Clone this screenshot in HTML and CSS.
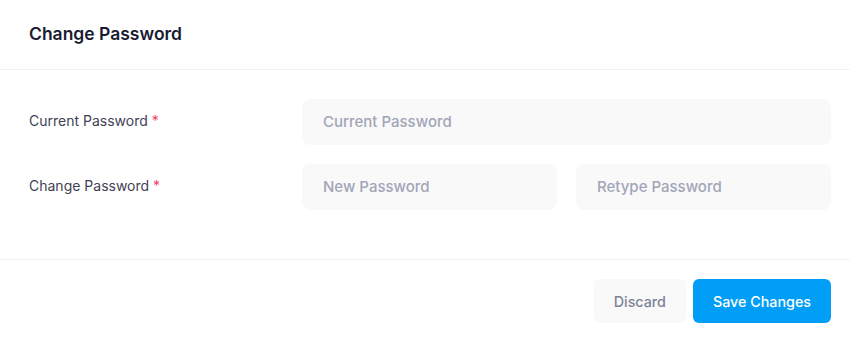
FILE: index.html
```html
<!DOCTYPE html>
<html lang="en">
<head>
  <meta charset="UTF-8">
  <meta name="viewport" content="width=device-width, initial-scale=1.0">
  <title>Change Password</title>
  <link rel="stylesheet" href="styles.css">
</head>
<body>

  <div class="card">
    <div class="card-header">
      <h3 class="card-title">Change Password</h3>
    </div>

    <div class="card-body">
      <div class="form-row">
        <label class="form-label" for="current">Current Password <span class="required">*</span></label>
        <div class="form-inputs">
          <input type="password" id="current" class="form-control" placeholder="Current Password">
        </div>
      </div>

      <div class="form-row">
        <label class="form-label" for="newPass">Change Password <span class="required">*</span></label>
        <div class="form-inputs two">
          <input type="password" id="newPass" class="form-control" placeholder="New Password">
          <input type="password" id="retype" class="form-control" placeholder="Retype Password">
        </div>
      </div>
    </div>

    <div class="card-footer">
      <button class="btn btn-light">Discard</button>
      <button class="btn btn-primary">Save Changes</button>
    </div>
  </div>

</body>
</html>
```

FILE: styles.css
```css
body {
  font-family: Inter, "Noto Sans", sans-serif;
  background-color: #fff;
  margin: 0;
  padding: 0;
}

.card {
  background-color: #fff;
}

.card-header {
  height: 69px;
  padding: 0 29px;
  display: flex;
  align-items: center;
  border-bottom: 1px solid #eff2f5;
}

.card-title {
  margin: 0 0 3px;
  font-size: 17.5px;
  font-weight: 600;
  color: #181c32;
}

.card-body {
  padding: 29px 19px 49px 29px;
  display: flex;
  flex-direction: column;
  gap: 19px;
}

.form-row {
  display: grid;
  grid-template-columns: 273px 1fr;
  align-items: center;
}

.form-label {
  font-size: 14px;
  font-weight: 400;
  color: #3f4254;
  margin-top: -4px;
}

.required {
  color: #f1416c;
}

.form-inputs {
  display: grid;
  grid-template-columns: minmax(0, 1fr);
  gap: 19px;
}

.form-inputs.two {
  grid-template-columns: minmax(0, 1fr) minmax(0, 1fr);
}

.form-control {
  width: 100%;
  min-width: 0;
  height: 46px;
  box-sizing: border-box;
  padding: 0 21px 2px;
  border: none;
  border-radius: 8px;
  background-color: #f9f9f9;
  font-family: inherit;
  font-size: 15px;
  font-weight: 500;
  color: #5e6278;
  outline: none;
}

.form-control::placeholder {
  color: #a1a5b7;
}

.card-footer {
  border-top: 1px solid #eff2f5;
  padding: 19px 19px 14px;
  display: flex;
  justify-content: flex-end;
  gap: 7px;
}

.btn {
  height: 44px;
  padding: 0 20px;
  border: none;
  border-radius: 6px;
  font-family: inherit;
  font-size: 14.3px;
  font-weight: 500;
  cursor: pointer;
}

.btn-light {
  background-color: #f9f9f9;
  color: #7e8299;
}

.btn-primary {
  background-color: #009ef7;
  color: #fff;
}
```
